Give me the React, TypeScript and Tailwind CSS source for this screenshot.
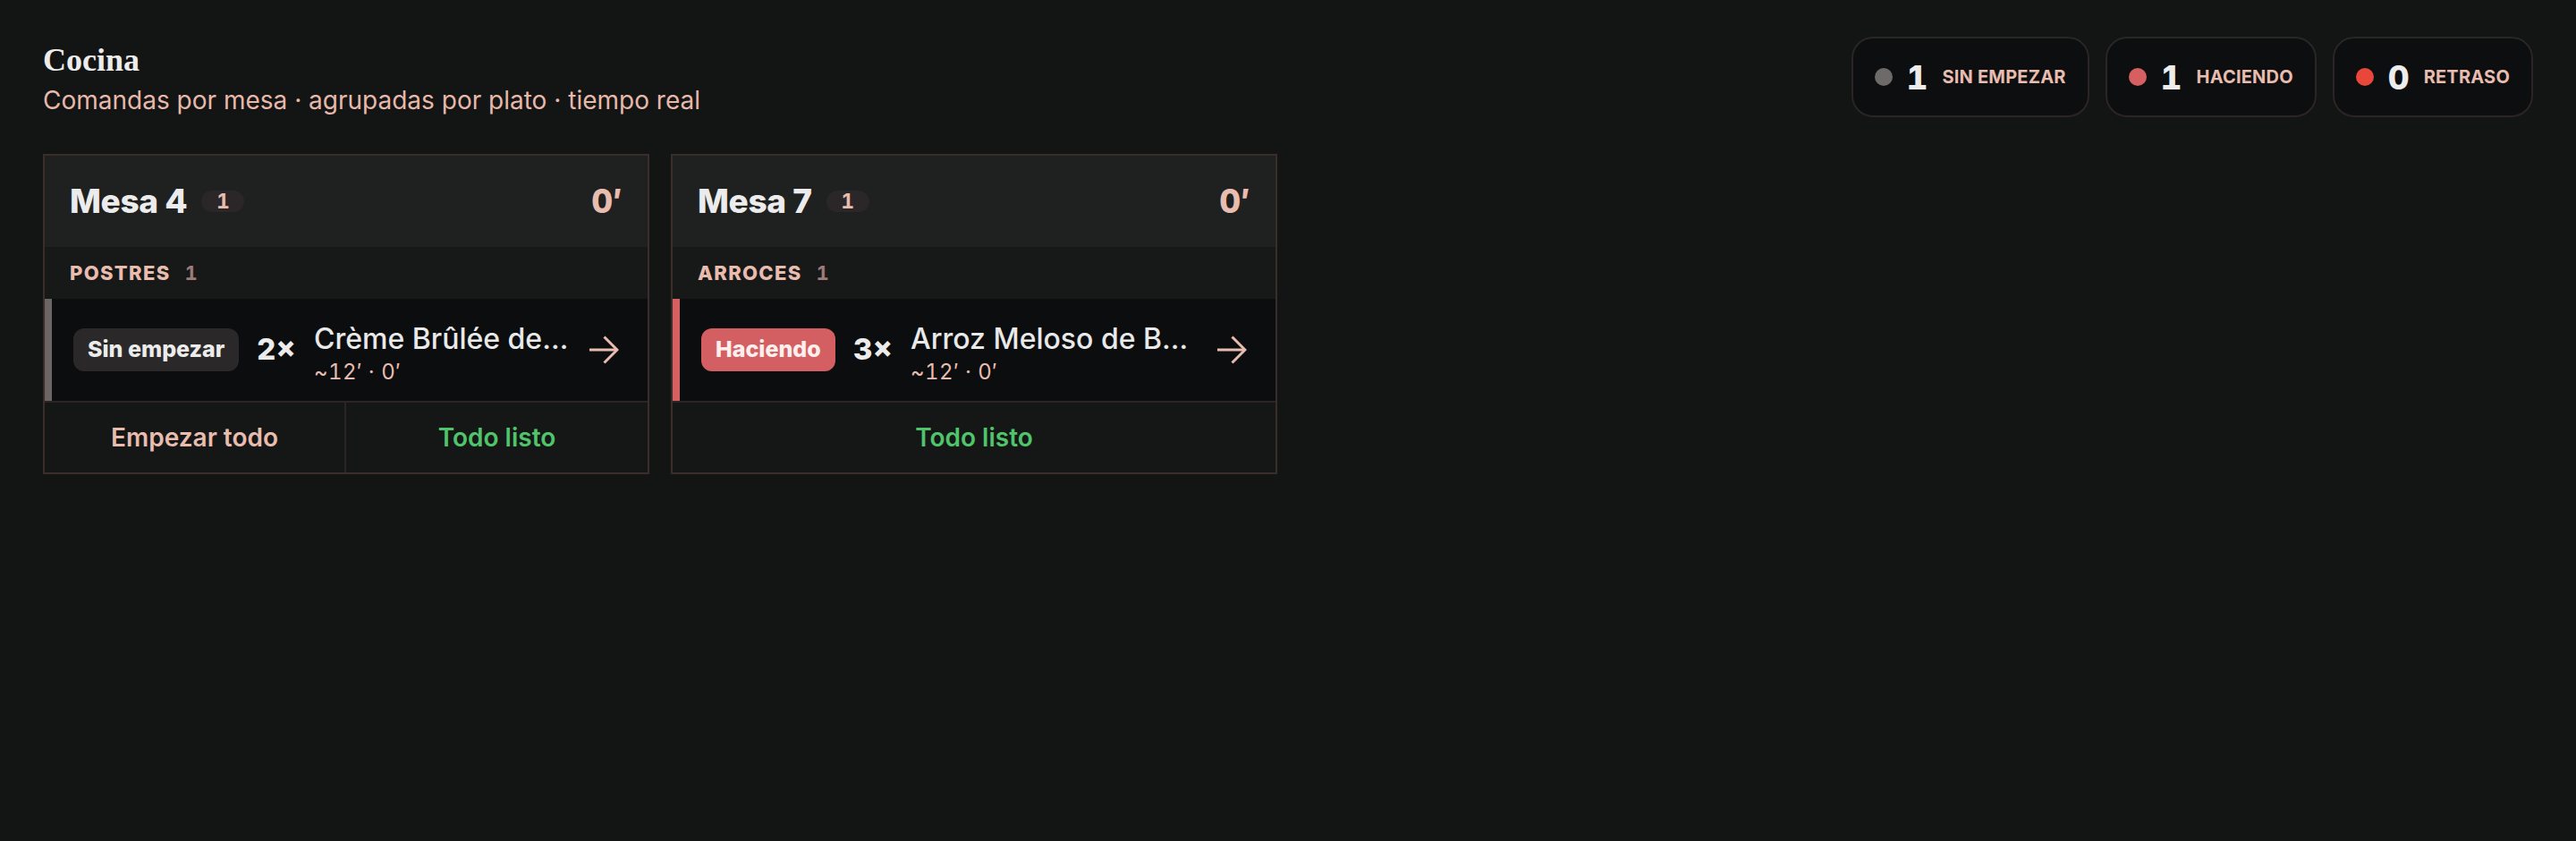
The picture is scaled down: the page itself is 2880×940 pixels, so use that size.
const pink = "text-[#e8bcae]";

const stats = [
  { n: 1, label: "Sin empezar", dot: "bg-[#6e6a6a]" },
  { n: 1, label: "Haciendo", dot: "bg-[#d65f62]" },
  { n: 0, label: "Retraso", dot: "bg-[#e8473a]" },
];

type Order = {
  mesa: number;
  group: string;
  status: "idle" | "doing";
  qty: number;
  name: string;
  canStart: boolean;
};

const orders: Order[] = [
  { mesa: 4, group: "Postres", status: "idle", qty: 2, name: "Crème Brûlée de Vainilla", canStart: true },
  { mesa: 7, group: "Arroces", status: "doing", qty: 3, name: "Arroz Meloso de Boletus", canStart: false },
];

const Arrow = () => (
  <svg width="34" height="32" viewBox="0 0 34 32" fill="none" stroke="#e8bcae" strokeWidth="3" className="shrink-0">
    <path d="M1 16H32" />
    <path d="M17.5 1.5L32 16L17.5 30.5" />
  </svg>
);

const Card = ({ o }: { o: Order }) => (
  <div className="border-2 border-[#3a2e2d] bg-[#151616]">
    <div className="flex h-[102px] items-center justify-between bg-[#1f2020] px-7">
      <div className="flex items-center gap-4">
        <span className="text-[37px] leading-10 font-extrabold tracking-[-0.01em] text-[#ececec]">Mesa {o.mesa}</span>
        <span className={`flex h-6 w-12 items-center justify-center rounded-full bg-[#2b2627] text-[23px] leading-none font-bold tabular-nums ${pink}`}>
          1
        </span>
      </div>
      <span className={`text-[37px] leading-10 font-extrabold tabular-nums ${pink}`}>0′</span>
    </div>

    <div className="flex h-[58px] items-center gap-4 bg-[#171818] px-7">
      <span className={`text-[22px] leading-7 font-extrabold uppercase tracking-[0.06em] ${pink}`}>{o.group}</span>
      <span className="text-[22px] leading-7 font-bold tabular-nums text-[#9c7b78]">1</span>
    </div>

    <div className="flex h-[114px] bg-[#0b0d0e]">
      <div className={`w-2 shrink-0 ${o.status === "doing" ? "bg-[#d46062]" : "bg-[#6b6565]"}`} />
      <div className="flex min-w-0 flex-1 items-center gap-5 pl-6 pr-8">
        {o.status === "doing" ? (
          <span className="flex h-12 shrink-0 items-center rounded-xl bg-[#d45f62] px-4 text-[25px] font-extrabold text-[#fff0ee]">
            Haciendo
          </span>
        ) : (
          <span className="flex h-12 shrink-0 items-center rounded-xl bg-[#2a2828] px-4 text-[25px] font-extrabold text-[#ececec]">
            Sin empezar
          </span>
        )}
        <span className="shrink-0 text-[33px] font-extrabold text-[#ececec]">{o.qty}×</span>
        <div className="min-w-0 flex-1 pt-[6px]">
          <div className="truncate text-[32px] leading-9 font-medium text-[#e9e9e9]">{o.name}</div>
          <div className={`mt-[7px] text-[24px] leading-6 tracking-[0.02em] tabular-nums ${pink}`}>~12′ · 0′</div>
        </div>
        <Arrow />
      </div>
    </div>

    <div className={`grid h-20 border-t-2 border-[#2b2525] ${o.canStart ? "grid-cols-2" : "grid-cols-1"}`}>
      {o.canStart && (
        <button className={`flex items-center justify-center border-r-2 border-[#2b2525] text-[28px] font-semibold ${pink}`}>
          Empezar todo
        </button>
      )}
      <button className="flex items-center justify-center text-[28px] font-semibold text-[#4fc46a]">Todo listo</button>
    </div>
  </div>
);

export default function App() {
  return (
    <div className="min-h-screen bg-[#131414] px-12 pt-[41px] font-['Inter','Noto_Sans',sans-serif]">
      <div className="flex items-start justify-between">
        <div className="mt-[6px]">
          <h1 className="font-['Liberation_Serif',serif] text-[36px] leading-10 font-bold text-[#ececec]">Cocina</h1>
          <p className="mt-[7px] text-[28px] leading-9 text-[#e7b9aa]">
            Comandas por mesa · agrupadas por plato · tiempo real
          </p>
        </div>
        <div className="flex gap-[18px]">
          {stats.map((s) => (
            <div
              key={s.label}
              className="flex h-[90px] items-center gap-4 rounded-3xl border-2 border-[#2c2525] bg-[#0c0e0f] px-6"
            >
              <span className={`h-5 w-5 rounded-full ${s.dot}`} />
              <span className="text-[37px] leading-none font-extrabold tabular-nums text-[#ededed]">{s.n}</span>
              <span className={`text-[20px] font-bold uppercase tracking-[0.01em] ${pink}`}>{s.label}</span>
            </div>
          ))}
        </div>
      </div>

      <div className="mt-[41px] grid grid-cols-4 items-start gap-6">
        {orders.map((o) => (
          <Card key={o.mesa} o={o} />
        ))}
      </div>
    </div>
  );
}
